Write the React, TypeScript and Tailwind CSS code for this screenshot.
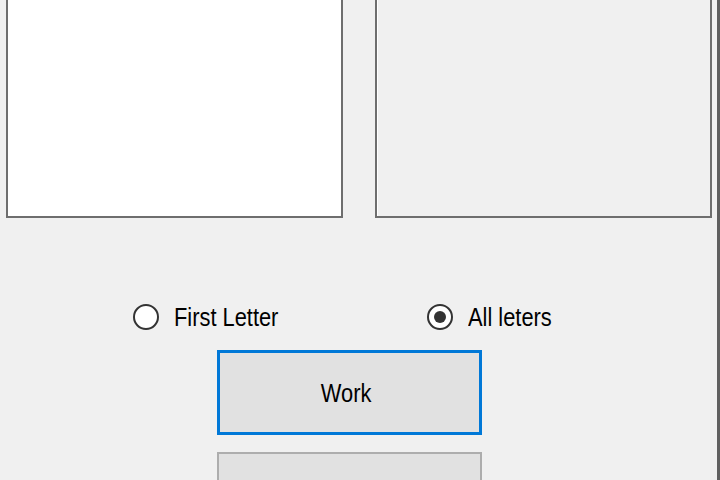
import React, { useState } from 'react';

type Mode = 'first' | 'all';

const Radio = ({ checked, label, onClick }: { checked: boolean; label: string; onClick: () => void }) => (
  <button type="button" onClick={onClick} className="flex items-center h-[26px]">
    <span className="w-[26px] h-[26px] rounded-full border-2 border-[#333333] bg-white flex items-center justify-center shrink-0">
      {checked && <span className="w-[12px] h-[12px] rounded-full bg-[#333333]" />}
    </span>
    <span className="ml-[15px] text-[26px] leading-[26px] text-black origin-left scale-x-84 whitespace-nowrap">{label}</span>
  </button>
);

export default function App() {
  const [mode, setMode] = useState<Mode>('all');

  return (
    <div className="w-[720px] h-[480px] overflow-hidden bg-[#f0f0f0] border-r-[3px] border-[#5f5f5f] font-['Liberation_Sans',Arial,sans-serif]">
      <div className="flex gap-[32px] pl-[6px] -mt-[4px]">
        <div className="w-[337px] h-[222px] border-2 border-[#6e6e6e] bg-white" />
        <div className="w-[337px] h-[222px] border-2 border-[#6e6e6e] bg-[#f0f0f0] shadow-[inset_1px_1px_0_#ffffff]" />
      </div>

      <div className="flex mt-[86px] pl-[133px]">
        <div className="w-[294px]">
          <Radio checked={mode === 'first'} label="First Letter" onClick={() => setMode('first')} />
        </div>
        <Radio checked={mode === 'all'} label="All leters" onClick={() => setMode('all')} />
      </div>

      <div className="flex flex-col gap-[17px] pl-[217px] mt-[20px]">
        <button type="button" className="w-[265px] h-[85px] border-[3px] border-[#0078d7] bg-[#e1e1e1] flex items-center justify-center pr-[6px]">
          <span className="text-[26px] leading-[26px] text-black scale-x-84">Work</span>
        </button>
        <button type="button" className="w-[265px] h-[85px] border-2 border-[#adadad] bg-[#e1e1e1]" />
      </div>
    </div>
  );
}
